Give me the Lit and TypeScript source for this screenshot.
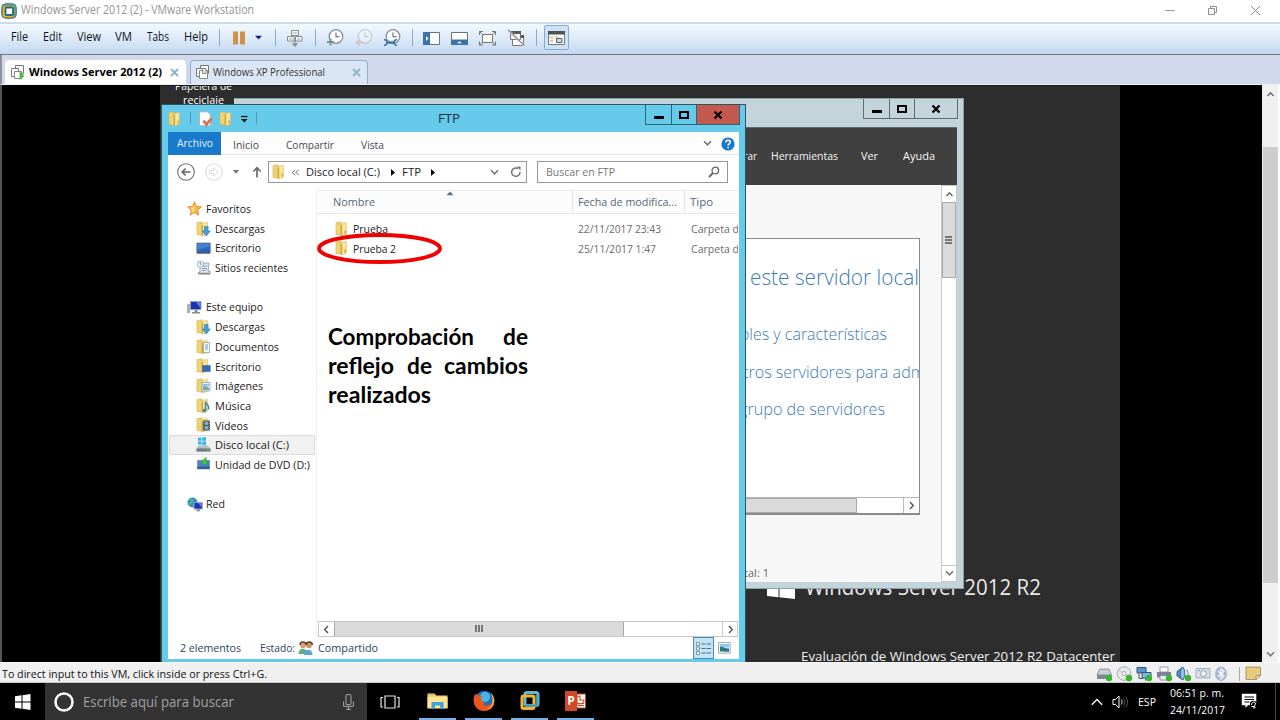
import { LitElement, html, css, svg, TemplateResult } from "lit";
import { customElement, property, query } from "lit/decorators.js";

/** Single-line label that condenses or expands its text to a given width. */
@customElement("ui-label")
class UiLabel extends LitElement {
  static styles = css`
    :host { display: block; white-space: pre; line-height: 1.36; flex: none; }
    span { display: inline-block; transform-origin: 0 50%; vertical-align: top; }
  `;
  @property() text = "";
  @property({ type: Number }) w = 0;
  @query("span") span!: HTMLSpanElement;
  firstUpdated() {
    this.style.width = `${this.w}px`;
    const natural = this.span.getBoundingClientRect().width;
    if (natural) this.span.style.transform = `scaleX(${this.w / natural})`;
  }
  render() {
    return html`<span>${this.text}</span>`;
  }
}

const label = (text: string, w: number, cls = "") =>
  html`<ui-label class=${cls} .text=${text} .w=${w}></ui-label>`;

const icon = (w: number, h: number, body: unknown) =>
  html`<svg width=${w} height=${h} viewBox="0 0 ${w} ${h}" fill="none">${body}</svg>`;

const clock = svg`<circle cx="10" cy="7.5" r="6.8" fill="#fdfdfd" stroke="#8b8f96" stroke-width="1.3"/><path d="M10 3.5v4.2h3.4" stroke="#777" stroke-width="1.2"/>`;
const folder = svg`<path d="M1 1.5 6 .8v13.4L1 13.4z" fill="#f0d474" stroke="#d3b04c" stroke-width=".6"/><path d="M5 2.5 11.4 1.5v11.8L6.5 15z" fill="#f8e69a" stroke="#d6b658" stroke-width=".6"/><path d="M6.5 3.4v11" stroke="#c9a640" stroke-width="1.2"/><path d="M9.3 9.4h1.600v3h-1.600z" fill="#d0ae4a"/>`;
const green = svg`<circle cx="13" cy="12" r="3.2" fill="#38b52c"/>`;

const icons: Record<string, TemplateResult> = {
  vm: icon(16, 16, svg`<rect x=".7" y=".7" width="14.6" height="14.6" rx="4" fill="#58a9b8" stroke="#2f7f97" stroke-width="1"/><rect x="1.5" y="2.5" width="12" height="12" rx="2.5" fill="#e5b13b" stroke="#a6812b" stroke-width=".8"/><rect x="4.500" y="4.500" width="7.5" height="7.5" rx="1" fill="#fff" stroke="#1f6d8b" stroke-width="1.8"/>`),
  pause: icon(14, 14, svg`<path d="M1 .5h5v13H1zM8 .5h5v13H8z" fill="#d2914a"/>`),
  down: icon(9, 6, svg`<path d="M1 .8h7L4.5 4.6z" fill="#0c1c9c"/>`),
  net: icon(18, 18, svg`<path d="M5.5 1.5h7v5h-7zM1.5 7.500h6.500v4.500H1.500zM9.500 7.500h6.500v4.500H9.500z" fill="#f8f9fb" stroke="#858a92"/><path d="M3 10h3.500M11 10h3.500M7 4h4" stroke="#9aa0a8"/><path d="M9 11v6M6.500 14l2.500 3 2.500-3" stroke="#858a92" stroke-width="1.300"/>`),
  snap: icon(19, 18, svg`${clock}<path d="M4.500 9.500v7M1 13h7" stroke="#6a9c86" stroke-width="2"/>`),
  revert: icon(19, 18, svg`<g opacity=".33">${clock}<path d="M9 13.500H2M5 10.500l-3.500 3 3.500 3" stroke="#c2906c" stroke-width="1.800"/></g>`),
  manage: icon(19, 18, svg`${clock}<path d="M3.500 13.500h8" stroke="#3b76ad" stroke-width="2.400"/><path d="M1 10.800c4-.8 4 6 0 5.400M14 10.800c-4-.8-4 6 0 5.400" stroke="#3b76ad" stroke-width="1.600"/>`),
  paneLeft: icon(19, 18, svg`<path d="M1.500 3.500h16v12h-16z" fill="#fff" stroke="#69737e"/><path d="M1 3h7v13H1z" fill="#3a74ac"/><path d="M4 7l2.500 2.500L4 12z" fill="#fff"/>`),
  paneBottom: icon(19, 18, svg`<path d="M1.500 3.500h16v12h-16z" fill="#fff" stroke="#69737e"/><path d="M1 10.500h17V16H1z" fill="#3a74ac"/><path d="M7 14.300l2.500-2 2.500 2z" fill="#fff"/>`),
  full: icon(19, 18, svg`<path d="M4.500 5.500h10v8h-10z" fill="#fafafa" stroke="#777"/><path d="M1.500 6V2.500H5M14 2.500h3.500V6M1.500 12.500V16H5M14 16h3.500v-3.500M1.500 2.500l3 3M17.500 2.500l-3 3M1.500 16l3-2.800M17.500 16l-3-2.800" stroke="#777"/>`),
  noUnity: icon(19, 18, svg`<path d="M5.500 7.500h11v9h-11z" fill="#fff" stroke="#777"/><path d="M13 6h4v3h-4z" fill="#5a5a5a"/><path d="M3.500 2.500h10v8h-10z" fill="#f4f4f4" stroke="#777"/><path d="M3 2h11v3H3z" fill="#5a5a5a"/><path d="M2 2l15.500 15" stroke="#e7eef7" stroke-width="2"/><path d="M1 1l16.500 15.500" stroke="#858585" stroke-width="1.200"/>`),
  library: icon(19, 18, svg`<path d="M1.500 2.500h16v13h-16z" fill="#fbfaf5" stroke="#74797e"/><path d="M1 2h17v3.500H1z" fill="#4d5257"/><path d="M3 7.500h3v2H3zM3 11h3v2H3zM7.500 7.500h4v1.500h-4z" fill="#dccb9e"/><path d="M9.500 9.500h5.500v4H9.500z" fill="#c9d9ef" stroke="#555f6c"/>`),
  tabOn: icon(16, 17, svg`<path d="M5.500 1.500h8v8h-8z" fill="#fff" stroke="#777"/><path d="M1.500 4.500h7v8h-7z" fill="#fff" stroke="#777"/><path d="M4.500 7.500h7v7h-7z" fill="#fff" stroke="#888"/><path d="M9.500 7.500 14.500 12l-5 4z" fill="#4eb83b"/>`),
  tab: icon(16, 17, svg`<path d="M5.500 1.500h8v8h-8z" fill="#fff" stroke="#777"/><path d="M1.500 4.500h7v8h-7z" fill="#fff" stroke="#777"/><path d="M4.500 6.500h8v8h-8z" fill="#fff" stroke="#888"/><path d="M7.500 4.500h3.500v5H7.500z" fill="#dfe6ef" stroke="#888"/>`),
  x: icon(9, 9, svg`<path d="M1 1l7 7M8 1L1 8" stroke="#8eb0ca" stroke-width="1.800"/>`),
  min: icon(11, 11, svg`<path d="M0 5.500h10" stroke="#9a9a9a"/>`),
  restore: icon(11, 11, svg`<path d="M1.500 3.500h6v6h-6zM3.500 3V1.500h6v6H8" stroke="#8d8d8d"/>`),
  close: icon(11, 11, svg`<path d="M1 1l9 9M10 1l-9 9" stroke="#8d8d8d"/>`),
  folder: icon(13, 16, folder),
  check: icon(15, 16, svg`<path d="M1.500 .8h8l3 3v11h-11z" fill="#fff" stroke="#aaa" stroke-width=".8"/><path d="M5.500 9.500l3 4 5-6" stroke="#e0704c" stroke-width="2.800"/>`),
  winMin: icon(12, 12, svg`<path d="M1 7h10v3H1z" fill="#000"/>`),
  winMax: icon(12, 12, svg`<path d="M2 3h8v6H2z" stroke="#000" stroke-width="2"/>`),
  winX: icon(12, 12, svg`<path d="M2.500 2.500l7 7M9.500 2.500l-7 7" stroke="#000" stroke-width="2.200"/>`),
  caret: icon(9, 9, svg`<path d="M1 1.500h6.500" stroke="#111" stroke-width="1.300"/><path d="M1 4h6.500L4.300 7.500z" fill="#111"/>`),
  chevDown: icon(9, 7, svg`<path d="M1 1.200l3.500 3.600L8 1.200" stroke="#777" stroke-width="1.600"/>`),
  chevUp: icon(9, 7, svg`<path d="M1.500 5l3-3.200L7.500 5" stroke="#666" stroke-width="1.400"/>`),
  chevLeft: icon(7, 9, svg`<path d="M5 1L1.700 4.500 5 8" stroke="#555" stroke-width="1.400"/>`),
  chevRight: icon(7, 9, svg`<path d="M2 1l3.300 3.500L2 8" stroke="#555" stroke-width="1.400"/>`),
  help: icon(14, 14, svg`<circle cx="7" cy="7" r="6.600" fill="#1a78cc"/><path d="M4.800 5.400c0-3 4.500-2.800 4.500-.2 0 1.500-2.200 1.700-2.200 3.200M7.100 9.700v1.600" stroke="#fff" stroke-width="1.500"/>`),
  back: icon(18, 18, svg`<circle cx="9" cy="9" r="8.300" stroke="#6f6f6f" stroke-width="1.100"/><path d="M13.500 9h-8M8.700 5.500L5.200 9l3.500 3.500" stroke="#666" stroke-width="1.700"/>`),
  fwd: icon(18, 18, svg`<circle cx="9" cy="9" r="8.300" stroke="#dcdcdc" stroke-width="1.100"/><path d="M4.500 7.500h4V5l4.500 4-4.500 4v-2.500h-4z" stroke="#dcdcdc"/>`),
  tri: icon(8, 6, svg`<path d="M.8 1h6.400L4 4.700z" fill="#777"/>`),
  up: icon(10, 12, svg`<path d="M5 11.500V2M1.300 5.500L5 1.700l3.700 3.800" stroke="#6b6b6b" stroke-width="1.700"/>`),
  crumb: icon(6, 9, svg`<path d="M1 1l4 3.500L1 8z" fill="#000"/>`),
  laquo: icon(9, 9, svg`<path d="M4 1.800L1.400 4.500 4 7.200M7.600 1.800L5 4.500l2.600 2.700" stroke="#666" stroke-width="1"/>`),
  reload: icon(12, 12, svg`<path d="M10 6a4.200 4.200 0 1 1-2.200-3.500" stroke="#777" stroke-width="1.500"/><path d="M6.500.5H10.500v4z" fill="#777"/>`),
  search: icon(12, 12, svg`<circle cx="7.300" cy="4.500" r="3.300" stroke="#666" stroke-width="1.300"/><path d="M5 7L1 11" stroke="#666" stroke-width="2"/>`),
  sort: icon(8, 5, svg`<path d="M.5 4.300L4 .5l3.500 3.800z" fill="#5a7184"/>`),
  star: icon(15, 15, svg`<path d="M7.500.8l2 4.600 4.900.5-3.700 3.300 1.100 4.900-4.300-2.500-4.300 2.500 1.100-4.900L.6 5.900l4.900-.5z" fill="#fbb63a" stroke="#e18a2c" stroke-width=".9"/><path d="M7.500 3v7.500l-3 1.500.8-3.500L3 6.500l3.200-.3z" fill="#fde08a"/>`),
  downloads: icon(15, 16, svg`${folder}<path d="M8.500 5.500h3.600V10h2.200l-4 5-4-5h2.200z" fill="#3e9ee0" stroke="#2a78b8" stroke-width=".6"/>`),
  desktop: icon(15, 16, svg`<path d="M.8 3h13.500v10H.8z" fill="#2f63b4" stroke="#76828e" stroke-width=".8"/><path d="M1.500 4h12v3c-5 0-7 2-12 3z" fill="#3f83d8"/><path d="M1 12.500h13v1H1z" fill="#34465c"/>`),
  recent: icon(15, 16, svg`<path d="M4 3h9l-1 8h2v3H4l-2-1 2-1z" fill="#e5eaee" stroke="#8b959c" stroke-width=".8"/><circle cx="4.200" cy="4" r="3.200" fill="#e8f0f4" stroke="#a5b0b7" stroke-width=".8"/><path d="M4.200 2v2.200h1.500M7 6h4.500M6 8.500h5M6 10.500h4" stroke="#7094ac" stroke-width=".9"/><path d="M2 13.500h12" stroke="#84898c" stroke-width="1.500"/>`),
  pc: icon(15, 14, svg`<path d="M3.500 1.500H14v8H3.500z" fill="#1b32b8" stroke="#9aa1aa"/><path d="M9 2h4.500v6z" fill="#5d83e6"/><path d="M7.500 10h3v2h2.500v1.500H5V12h2.500z" fill="#848c96"/><path d="M.6 4.500h2v8h-2z" fill="#b7bdc3" stroke="#7d858c" stroke-width=".6"/>`),
  docs: icon(15, 16, svg`${folder}<path d="M7.500 3.500h6v10h-6z" fill="#f5f9fc" stroke="#8ea0af" stroke-width=".8"/><path d="M9 6h3M9 8h3M9 10h3" stroke="#6c9cc4"/>`),
  deskFolder: icon(15, 16, svg`${folder}<path d="M6.500 7.500h7.800v6H6.500z" fill="#2d6dbb" stroke="#54718c" stroke-width=".7"/>`),
  images: icon(15, 16, svg`${folder}<path d="M6 4.500h8v8.500H6z" fill="#eaf4fa" stroke="#8aa5b6" stroke-width=".8"/><path d="M7 9l2-1.500 4 2.500v2H7z" fill="#6daf9c"/><path d="M7 6h6v2H7z" fill="#88c0ea"/>`),
  music: icon(15, 16, svg`${folder}<path d="M9.500 12.500V3.500c0 3 4.500 3 3 8" stroke="#2f88c5" stroke-width="1.300"/><circle cx="8.500" cy="12.500" r="1.700" fill="#2f88c5"/>`),
  video: icon(15, 16, svg`${folder}<path d="M7 3.500h7v10H7z" fill="#3c4d58"/><path d="M8.800 4.500h3.500v3.500H8.800zM8.800 9h3.500v3.500H8.800z" fill="#7fb3d0"/><path d="M7.800 4v9M13.300 4v9" stroke="#ccd6dc" stroke-width=".7" stroke-dasharray="1 1"/>`),
  disk: icon(15, 16, svg`<path d="M2 .8l3.500-.3v3.300H2zM6.200.5 10 0v3.800H6.200zM2 4.500h3.500v3.300L2 7.500zM6.200 4.500H10v3.800l-3.800-.4z" fill="#37b5ea"/><path d="M3 8.500h9l2.500 3H.5z" fill="#b7bfc6"/><path d="M.5 11.300h14v3.400H.5z" fill="#6f7b86"/><path d="M11 12.500h2v1.200h-2z" fill="#51db4c"/>`),
  dvd: icon(15, 15, svg`<path d="M1.500 3.500h12v8.500h-12z" fill="#4a83c7" stroke="#6a7f95" stroke-width=".6"/><path d="M1.500 9.500h12v2.500h-12z" fill="#335d96"/><path d="M10.500.300L7 3l-2 .500L8 8.500l4.500-4-2.500-.3z" fill="#41c443" stroke="#2a9636" stroke-width=".5"/>`),
  network: icon(16, 15, svg`<circle cx="5.500" cy="5.500" r="5" fill="#3a8bd8"/><path d="M3 2.500c2 0 3 1 2 2.500S2 6 1.500 8M6 8.500c1-1 2.500 0 2 1.500" stroke="#52bf5c" stroke-width="2"/><path d="M7 5.500h8.300v6.500H7z" fill="#1c34bf" stroke="#9ea8b4" stroke-width=".9"/><path d="M11 6h3.700v4z" fill="#6488e2"/><path d="M9.500 12.500h3.500v1.800H9.500z" fill="#7c8793"/>`),
  people: icon(15, 15, svg`<circle cx="5" cy="4.500" r="2.800" fill="#d6a06e"/><circle cx="11" cy="4.500" r="2.800" fill="#c99060"/><path d="M2 4c0-4 6-4 6 0M8.300 4c0-4 6-4 6 0" stroke="#5b3d26" stroke-width="1.400"/><path d="M.5 13c0-7 8.500-7 8.500 0z" fill="#5fae7a"/><path d="M6 14c0-7 8.500-7 8.500 0z" fill="#5ba4d4"/>`),
  details: icon(15, 13, svg`<path d="M.5.5h3v3h-3zM.5 5h3v3h-3zM.5 9.500h3v3h-3z" fill="#fff" stroke="#5d7c92" stroke-width=".8"/><path d="M5.500 2h4M10.500 2H15M5.500 6.500h4M10.500 6.500H15M5.500 11h4M10.500 11H15" stroke="#4a6d88" stroke-width="1.200"/>`),
  thumbs: icon(13, 12, svg`<path d="M.6.600h11.500v10.500H.600z" fill="#fff" stroke="#92a7b9"/><path d="M2 2h9v3.500H2z" fill="#8bc6f0"/><path d="M2 5c3-1 5 2 9 1.500V9.500H2z" fill="#2d7a68"/><path d="M6 7.500h5v2H6z" fill="#256fb0"/>`),
  winLogo: icon(16, 16, svg`<path d="M0 2.200l6.500-.9v6.200H0zM7.500 1.200L15.500 0v7.500h-8zM0 8.500h6.500v6.200L0 13.800zM7.500 8.500h8V16l-8-1.200z" fill="#fff"/>`),
  bigLogo: icon(29, 30, svg`<path d="M0 4l11.500-1.800V15H0zM12.500 2L28 -.5V15H12.500zM0 16h11.500v11.200L0 26zM12.500 16H28v13l-15.500-1.700z" fill="#fff"/>`),
  cortana: icon(20, 20, svg`<circle cx="10" cy="10" r="8.500" stroke="#fff" stroke-width="2.500"/>`),
  mic: icon(11, 16, svg`<rect x="3" y=".6" width="5" height="10" rx="1" stroke="#aaa"/><path d="M.6 7.500v4.800h9.800V7.500M5.500 12.300v3M3 15.300h5" stroke="#aaa"/>`),
  task: icon(20, 14, svg`<path d="M5 1h10v12H5zM3 2.500H1v9.500h2M17 2.500h2v9.500h-2" stroke="#e8e8e8" stroke-width="1.200"/>`),
  explorer: icon(21, 18, svg`<path d="M.5 1.500h7l1.500 2h11.500V16H.5z" fill="#f7d168"/><path d="M.5 5h20v11.500H.5z" fill="#fde594"/><path d="M4.500 10h12v7h-3.300v-3.500H8V17H4.500z" fill="#3ba5dc"/><path d="M2 1.500h4v1H2z" fill="#4a9ec9"/>`),
  firefox: icon(22, 22, svg`<circle cx="11.500" cy="10.500" r="9.700" fill="#1f6fc1"/><circle cx="12" cy="7" r="5" fill="#49b5ea"/><path d="M2 4c-4 9 1 17 9 17 7 0 11.500-5 10.300-13C20 13 17 16 13 15.500c-4-.5-3-3 0-3-3-2-5-1-5-4 0-1 1.500-1 1.500-2C7 6 5 6 5 4 4 4 3 5.500 2 4z" fill="#e8571c"/><path d="M18 3c3.500 3.500 4 8 2 12-2 3.500-6 5-9 4.500 5 0 8.500-4 8.500-8.500 0-3-.5-5-1.500-8z" fill="#fbb42e"/>`),
  vmTask: icon(20, 20, svg`<rect x="5" y="1.500" width="13" height="13" rx="2" stroke="#5fbcd0" stroke-width="3"/><rect x="2" y="5" width="12" height="12.500" rx="1.500" stroke="#f5b334" stroke-width="3"/><path d="M5.500 14.500h11V4" stroke="#3595b2" stroke-width="2"/>`),
  arrowUp: icon(12, 8, svg`<path d="M.8 6.800L6 1.500l5.200 5.300" stroke="#fff" stroke-width="1.300"/>`),
  sound: icon(17, 14, svg`<path d="M1 4.500h2.500L7 1v12L3.500 9.500H1z" stroke="#fff"/><path d="M9 4.500c1.500 1.500 1.500 3.500 0 5" stroke="#ddd"/><path d="M11 3c2.500 2.500 2.500 5.500 0 8M13.200 1.500c3.300 3.500 3.300 7.500 0 11" stroke="#555"/>`),
  notif: icon(17, 17, svg`<path d="M.8.8h14.500v11.500H7L4.500 15v-2.700H.8z" fill="#fff"/><path d="M3.500 4h9.500M3.500 6.500h9.500M3.500 9h5" stroke="#000"/><circle cx="12.500" cy="11.500" r="3.700" fill="#000"/><path d="M10.500 12c0-3 3-4 4-2l-1 3.500h-3M12 15l2.500-.5" stroke="#fff" stroke-width="1"/>`),
  hdd: icon(17, 16, svg`<path d="M3.500 3h9.500l2.500 6H1z" fill="#c8ced5" stroke="#6e7883" stroke-width=".7"/><path d="M1 9h14.500v4H1z" fill="#7d8895"/>${green}`),
  cd: icon(17, 16, svg`<circle cx="8" cy="7.500" r="6.800" fill="#e6eaed" stroke="#a4acb2"/><circle cx="8" cy="7.500" r="2" fill="#fff" stroke="#9aa3aa"/><path d="M3 4l3.500 2.500M9.500 9l3 3" stroke="#b8c2c9"/>${green}`),
  lan: icon(17, 16, svg`<path d="M1 1.500h9V7H1z" fill="#5595d0" stroke="#39566f"/><path d="M6 6.500h9V12H6z" fill="#7ab7e8" stroke="#39566f"/><path d="M3 7.500v5h4M9.500 12.500v2" stroke="#39566f"/>${green}`),
  printer: icon(17, 16, svg`<path d="M4 1h8v5H4z" fill="#fff" stroke="#82899a" stroke-width=".8"/><path d="M1 6h14v5.500H1z" fill="#7d8297"/><path d="M4 9.500h8v4.500H4z" fill="#eceef4" stroke="#7a8093" stroke-width=".8"/>${green}`),
  audio: icon(17, 16, svg`<path d="M2 5.500L8 1v13L2 10z" fill="#5593c8" stroke="#37638b"/><ellipse cx="7.500" cy="7.500" rx="2.300" ry="6" fill="#8fc0e8" stroke="#37638b"/><path d="M11.500 4c2 2 2 5 0 7" stroke="#6aa0cc" stroke-width="1.200"/>${green}`),
  camera: icon(17, 16, svg`<path d="M1 2.500h14v9.500H1z" fill="#d7dee4" stroke="#a5b1bc"/><circle cx="8.500" cy="7.500" r="3" fill="#eff3f6" stroke="#8d9dac"/><path d="M3 4.500h2" stroke="#7d93a6"/>`),
  bt: icon(14, 16, svg`<ellipse cx="7" cy="7.800" rx="6" ry="7.200" fill="#a9b7d4"/><path d="M4 5l6 5-3 2.800V2.800L10 5.500l-6 5" stroke="#fff" stroke-width="1.100"/>`),
  note: icon(17, 15, svg`<path d="M1 1h14.500v8.500L11 13.500H1z" fill="#eacb7d" stroke="#9c8350" stroke-width=".8"/><path d="M11 13.500v-4h4.500z" fill="#fff0c2" stroke="#9c8350" stroke-width=".8"/>`),
};

const sideItems: [string, string, number, string][] = [
  ["star", "Favoritos", 45, "root"], ["downloads", "Descargas", 50, ""], ["desktop", "Escritorio", 46, ""],
  ["recent", "Sitios recientes", 73, ""], ["", "", 0, ""], ["pc", "Este equipo", 57, "root"],
  ["downloads", "Descargas", 50, ""], ["docs", "Documentos", 64, ""], ["deskFolder", "Escritorio", 46, ""],
  ["images", "Imágenes", 48, ""], ["music", "Música", 36, ""], ["video", "Vídeos", 33, ""],
  ["disk", "Disco local (C:)", 74, "selected"], ["dvd", "Unidad de DVD (D:)", 95, ""], ["", "", 0, ""],
  ["network", "Red", 19, "root"],
];
const files: [string, number, string, number][] = [
  ["Prueba", 35, "22/11/2017 23:43", 83], ["Prueba 2", 43, "25/11/2017 1:47", 78],
];

@customElement("app-root")
class AppRoot extends LitElement {
  static styles = css`
    :host { display: flex; flex-direction: column; width: 1280px; height: 720px; overflow: hidden; background: #000;
      font-family: "Open Sans", "Noto Sans", sans-serif; font-size: 11.5px; color: #1b1b1b; }
    * { box-sizing: border-box; }
    svg { display: block; flex: none; }
    .titlebar { height: 22px; background: #fff; display: grid; grid-template-columns: 20px 1144px 42px 43px 20px; align-items: center;
      padding: 0 0 1px 1px; color: #949494; font-size: 12px; flex: none; }
    .menubar { height: 33px; flex: none; display: grid; align-items: center; padding: 0 0 3px 11px; color: #101522; font-size: 12px;
      border-top: 2px solid #ccdcec; border-bottom: 1px solid #71757c; background: linear-gradient(#f4f9fe, #dfebf8 45%, #c3d9f1);
      grid-template-columns: 32px 34px 38px 32px 37px 35px 13px 22px 21px 11px 29px 11px 29px 28px 29px 10px 28px 28px 29px 29px 8px 26px; }
    .sep { width: 1px; height: 17px; background: #8eabca; }
    .boxed { width: 25px; height: 25px; display: grid; place-items: center; border: 1px solid #85acd9; border-radius: 2px; background: #cfe1f6; }
    .tabs { height: 30px; flex: none; background: #d3d9ec; border-left: 2px solid #8d929b; border-bottom: 1px solid #edf0f7; padding: 5px 0 0 3px; display: flex; gap: 4px; }
    .tab { display: grid; align-items: center; padding-left: 5px; border-radius: 4px 4px 0 0; }
    .tab.on { width: 181px; background: #fff; font-weight: 700; color: #000; font-size: 11px; padding-top: 1px; grid-template-columns: 19px 141px 10px; }
    .tab.off { width: 178px; background: #dbe6f5; border: 1px solid #8db0d9; border-bottom: 0; grid-template-columns: 18px 139px 10px; padding-left: 4px; color: #333; font-size: 11px; }
    .viewport { height: 577px; flex: none; position: relative; display: flex; overflow: hidden; border-left: 2px solid #555; }
    .desktop { width: 960px; height: 577px; margin-left: 158px; background: #2d2d2d; position: relative; overflow: hidden; border-top: 1px solid #1a1a1a; }
    .vscroll { width: 16px; margin-left: 142px; background: #f0f0f0; display: flex; flex-direction: column; align-items: center; justify-content: space-between; padding: 6px 0 4px; }
    .vscroll .thumb { width: 15px; height: 436px; margin-bottom: 20px; background: #cdcdcd; }
    .edge { width: 2px; background: #fff; }
    .recycle { position: absolute; left: 10px; top: -7px; width: 66px; color: #fff; display: flex; flex-direction: column; align-items: center; }
    .recycle ui-label { line-height: 14px; }
    .brand { position: absolute; left: 607px; top: 484px; display: flex; gap: 9px; color: #e8e8e8; font-size: 22px; }
    .brand ui-label { margin-top: 2px; }
    .eval { position: absolute; left: 641px; top: 562px; color: #f0f0f0; font-size: 13px; }
    .win { position: absolute; display: flex; flex-direction: column; }
    .manager { left: 74px; top: 12px; width: 730px; height: 491px; background: #c3d5db; border: solid #8da0a8; border-width: 1px 1px 1px 0; padding: 0 6px 6px 0; }
    .winbtns { display: flex; height: 20px; border: 1px solid #5f6b70; border-top: 0; }
    .winbtns > div { display: grid; place-items: center; border-left: 1px solid #5f6b70; }
    .winbtns > div:first-child { border-left: 0; }
    .b1 { width: 25px; } .b2 { width: 25px; } .b3 { width: 43px; }
    .mtitle { height: 28px; display: flex; justify-content: flex-end; margin-right: -1px; }
    .mhead { height: 58px; background: #404040; color: #f4f4f4; display: grid; grid-template-columns: 537px 90px 42px 32px; align-items: center; font-size: 11px; border-top: 1px solid #60696c; }
    .mhead ui-label:first-child { justify-self: start; margin-left: 506px; }
    .mbody { flex: 1; display: flex; background: #f7f7f7; min-height: 0; }
    .mpage { width: 707px; display: flex; flex-direction: column; padding-top: 53px; }
    .card { width: 686px; height: 277px; border: solid #8b8b8b; border-width: 1px 1px 2px 0; background: #fff; display: flex; flex-direction: column; color: #3c7cb8; font-size: 17px; font-weight: 300; padding-left: 504px; overflow: hidden; }
    .card ui-label { height: 37.500px; line-height: 37.500px; }
    .card ui-label.h { font-size: 22px; height: 76px; line-height: 74px; margin-left: 12px; }
    .card ui-label.c1 { margin-left: 2px; } .card ui-label.c2 { margin-left: 5px; } .card ui-label.c3 { margin-left: 1px; }
    .cscroll { margin-top: auto; height: 16px; display: flex; border-top: 1px solid #b5b5b5; }
    .cscroll .thumb { width: 119px; background: #dadada; border: 1px solid #aaa; }
    .cscroll .arrow { margin-left: auto; width: 16px; border-left: 1px solid #bbb; display: grid; place-items: center; }
    .total { margin: 51px 0 0 510px; color: #666; font-size: 11px; }
    .mscroll { width: 16px; border: 1px solid #c8c8c8; background: #fff; display: flex; flex-direction: column; }
    .mscroll .arrow { height: 16px; display: grid; place-items: center; }
    .mscroll .thumb { height: 76px; background: #dadada; border: 1px solid #aaa; display: grid; place-items: center; }
    .mscroll .end { margin-top: auto; border-top: 1px solid #c8c8c8; }
    .files { left: 1px; top: 18px; width: 585px; height: 558px; background: #66caea; border: solid #2f5361; border-width: 1px 1px 0 1px; padding: 0 6px 3px 6px; }
    .ftitle { height: 27px; display: grid; grid-template-columns: 22px 8px 21px 21px 16px 182px 207px 95px; color: #14333f; align-items: start; }
    .ftitle > svg { margin-top: 6px; }
    .ftitle > svg.caret, .ftitle .drop { margin-top: 10px; }
    .ftitle > .sep { height: 12px; margin-top: 7px; background: #5795a8; }
    .ftitle > ui-label { font-size: 13px; margin-top: 5px; }
    .ftitle .winbtns { border-color: #2f6477; } .ftitle .winbtns > div { border-color: #2f6477; }
    .ftitle .b3 { background: #c35a50; }
    .ribbon { height: 23px; background: #fdfdfd; border-bottom: 1px solid #e4e6e8; display: grid; grid-template-columns: 53px 12px 53px 75px 342px 18px 14px; align-items: center; color: #4a4a52; font-size: 11px; }
    .ribbon > ui-label { padding-top: 3px; }
    .ribbon .archivo { background: #1979ca; color: #e7f2fc; height: 23px; display: grid; place-items: center; align-self: start; }
    .address { height: 35px; background: #fff; display: grid; grid-template-columns: 28px 27px 20px 16px 259px 10px 191px; align-items: center; padding: 0 0 1px 9px; color: #222; }
    .path { height: 22px; border: 1px solid #979797; display: grid; grid-template-columns: 19px 15px 84px 12px 28px 60px 20px 12px; padding-left: 3px; align-items: center; }
    .find { height: 22px; border: 1px solid #979797; display: flex; align-items: center; justify-content: space-between; padding: 0 7px 0 8px; color: #777; font-size: 11px; }
    .main { flex: 1; min-height: 0; display: flex; background: #fff; }
    .side { width: 149px; border-right: 1px solid #f0f0f0; padding: 9px 0 0 1px; }
    .item { height: 19.700px; width: 146px; display: grid; grid-template-columns: 19px 1fr; padding-left: 26px; align-items: center; border: 1px solid transparent; }
    .item.root { padding-left: 17px; }
    .item.selected { background: #f1f1f1; border-color: #dcdcdc; }
    .list { width: 421px; overflow: hidden; display: flex; flex-direction: column; color: #6b6b6b; border-top: 1px solid #ececec; }
    .cols { height: 23px; display: grid; grid-template-columns: 239px 6px 106px 6px 64px; padding-left: 16px; align-items: center; color: #54677d; border-bottom: 1px solid #e8e8e8; background: #fcfcfc; position: relative; }
    .cols .vline { width: 1px; height: 22px; background: #e2e5e8; }
    .cols .sort { position: absolute; left: 129px; top: 0; }
    .rows { padding-top: 5px; flex: 1; }
    .file { height: 19.600px; display: grid; grid-template-columns: 18px 225px 113px 50px; padding-left: 18px; align-items: center; }
    .file .name { color: #222; }
    .hscroll { height: 16px; display: flex; border: 1px solid #c8c8c8; background: #fff; margin-left: 1px; flex: none; }
    .hscroll .arrow { width: 15px; display: grid; place-items: center; }
    .hscroll .thumb { width: 290px; background: #dadada; border: 1px solid #a8a8a8; border-width: 0 1px; display: grid; place-items: center; }
    .hscroll .end { margin-left: auto; border-left: 1px solid #c8c8c8; }
    .fstatus { height: 22px; background: #fff; display: grid; grid-template-columns: 80px 38px 20px 375px 25px 13px; padding-left: 12px; align-items: center; color: #2b4566; flex: none; }
    .view { width: 21px; height: 22px; display: grid; place-items: center; background: #c3e3f6; border: 1px solid #4e8cba; }
    .oval { position: absolute; left: 315px; top: 147px; }
    .caption { position: absolute; left: 326px; top: 237px; width: 200px; font: 700 22px "Lato", "Open Sans", sans-serif; color: #000; }
    .caption div { height: 29px; display: flex; justify-content: space-between; }
    .caption ui-label { line-height: 29px; }
    .status { height: 21px; flex: none; background: #f0f0f0; border-bottom: 1px solid #c8c8c8; border-top: 1px solid #fafafa; display: grid; align-items: center; padding: 2px 0 0 2px; color: #111;
      grid-template-columns: 1094px 20px 20px 20px 19px 20px 19px 25px 6px 20px; }
    .status .sep { background: #aaa; height: 14px; }
    .taskbar { height: 37px; flex: none; background: #000; display: grid; grid-template-columns: 45px 322px 52px 46px 46px 46px 534px 21px 26px 32px 71px 34px 5px; align-items: center; color: #fff; }
    .start { padding-left: 15px; }
    .cortana { height: 37px; background: #333; color: #a0a0a0; font-size: 14px; display: grid; grid-template-columns: 29px 260px 11px; padding-left: 9px; align-items: center; }
    .taskview { padding-left: 13px; }
    .app { width: 37px; height: 37px; display: grid; place-items: center; border-bottom: 2px solid #76b2e8; }
    .clock { display: flex; flex-direction: column; justify-content: space-between; height: 33px; padding-bottom: 1px; }
    .clock ui-label { line-height: 15px; }
    .ppt { display: grid; grid-template-columns: 12px 9px; height: 20px; align-items: center; }
    .ppt b { height: 20px; background: #d24726; color: #fff; font-size: 12px; line-height: 20px; text-align: center; }
    .peek { width: 1px; height: 37px; background: #444; }
  `;

  menubar() {
    const sep = html`<div class="sep"></div>`;
    return html`<div class="menubar">
      ${label("File", 17)}${label("Edit", 19)}${label("View", 24)}${label("VM", 17)}${label("Tabs", 22)}${label("Help", 24)}
      ${sep}${icons.pause}${icons.down}${sep}${icons.net}${sep}${icons.snap}${icons.revert}${icons.manage}${sep}
      ${icons.paneLeft}${icons.paneBottom}${icons.full}${icons.noUnity}${sep}<div class="boxed">${icons.library}</div>
    </div>`;
  }

  windowButtons() {
    return html`<div class="winbtns"><div class="b1">${icons.winMin}</div><div class="b2">${icons.winMax}</div><div class="b3">${icons.winX}</div></div>`;
  }

  manager() {
    return html`<div class="win manager">
      <div class="mtitle">${this.windowButtons()}</div>
      <div class="mhead">${label("trar", 17)}${label("Herramientas", 67)}${label("Ver", 17)}${label("Ayuda", 32)}</div>
      <div class="mbody">
        <div class="mpage">
          <div class="card">
            ${label("este servidor local", 169, "h")}${label("oles y características", 147, "c1")}
            ${label("tros servidores para adm", 182, "c2")}${label("grupo de servidores", 146, "c3")}
            <div class="cscroll"><div class="thumb"></div><div class="arrow">${icons.chevRight}</div></div>
          </div>
          <div class="total">${label("tal: 1", 25)}</div>
        </div>
        <div class="mscroll">
          <div class="arrow">${icons.chevUp}</div>
          <div class="thumb">${icon(8, 9, svg`<path d="M0 1h7M0 4h7M0 7h7" stroke="#555" stroke-width="1.500"/>`)}</div>
          <div class="arrow end">${icons.chevDown}</div>
        </div>
      </div>
    </div>`;
  }

  fileWindow() {
    return html`<div class="win files">
      <div class="ftitle">
        ${icons.folder}<div class="sep"></div>${icons.check}${icons.folder}<div class="drop">${icons.caret}</div>
        <div class="sep"></div>${label("FTP", 22)}${this.windowButtons()}
      </div>
      <div class="ribbon">
        <div class="archivo">${label("Archivo", 36)}</div><span></span>
        ${label("Inicio", 26)}${label("Compartir", 48)}${label("Vista", 23)}${icons.chevDown}${icons.help}
      </div>
      <div class="address">
        ${icons.back}${icons.fwd}${icons.tri}${icons.up}
        <div class="path">${icons.folder}${icons.laquo}${label("Disco local (C:)", 74)}${icons.crumb}${label("FTP", 19)}${icons.crumb}${icons.chevDown}${icons.reload}</div>
        <span></span>
        <div class="find">${label("Buscar en FTP", 69)}${icons.search}</div>
      </div>
      <div class="main">
        <div class="side">
          ${sideItems.map(([ic, text, w, kind]) => html`<div class="item ${kind}">${text ? html`${icons[ic]}${label(text, w)}` : ""}</div>`)}
        </div>
        <div class="list">
          <div class="cols">
            ${label("Nombre", 42)}<div class="vline"></div>${label("Fecha de modifica...", 99)}<div class="vline"></div>${label("Tipo", 23)}
            <div class="sort">${icons.sort}</div>
          </div>
          <div class="rows">
            ${files.map(([n, w, d, dw]) => html`<div class="file">${icons.folder}${label(n, w, "name")}${label(d, dw)}${label("Carpeta d", 48)}</div>`)}
          </div>
          <div class="hscroll">
            <div class="arrow">${icons.chevLeft}</div>
            <div class="thumb">${icon(9, 8, svg`<path d="M1 0v7M4 0v7M7 0v7" stroke="#555" stroke-width="1.500"/>`)}</div>
            <div class="arrow end">${icons.chevRight}</div>
          </div>
        </div>
      </div>
      <div class="fstatus">
        ${label("2 elementos", 61)}${label("Estado:", 35)}${icons.people}${label("Compartido", 60)}
        <div class="view">${icons.details}</div>${icons.thumbs}
      </div>
    </div>`;
  }

  render() {
    return html`
      <div class="titlebar">${icons.vm}${label("Windows Server 2012 (2) - VMware Workstation", 233)}${icons.min}${icons.restore}${icons.close}</div>
      ${this.menubar()}
      <div class="tabs">
        <div class="tab on">${icons.tabOn}${label("Windows Server 2012 (2)", 133)}${icons.x}</div>
        <div class="tab off">${icons.tab}${label("Windows XP Professional", 112)}${icons.x}</div>
      </div>
      <div class="viewport">
        <div class="desktop">
          <div class="recycle">${label("Papelera de", 57)}${label("reciclaje", 41)}</div>
          <div class="brand">${icons.bigLogo}${label("Windows Server 2012 R2", 236)}</div>
          <div class="eval">${label("Evaluación de Windows Server 2012 R2 Datacenter", 314)}</div>
          ${this.manager()}${this.fileWindow()}
        </div>
        <div class="vscroll">${icons.chevUp}<div class="thumb"></div>${icons.chevDown}</div>
        <div class="edge"></div>
        <div class="oval">${icon(126, 32, svg`<ellipse cx="62.500" cy="16.500" rx="60.500" ry="13.500" stroke="#f00000" stroke-width="3.800"/>`)}</div>
        <div class="caption">
          <div>${label("Comprobación", 146)}${label("de", 25)}</div>
          <div>${label("reflejo", 66)}${label("de", 25)}${label("cambios", 84)}</div>
          <div>${label("realizados", 103)}</div>
        </div>
      </div>
      <div class="status">
        ${label("To direct input to this VM, click inside or press Ctrl+G.", 265)}
        ${icons.hdd}${icons.cd}${icons.lan}${icons.printer}${icons.audio}${icons.camera}${icons.bt}<div class="sep"></div>${icons.note}
      </div>
      <div class="taskbar">
        <div class="start">${icons.winLogo}</div>
        <div class="cortana">${icons.cortana}${label("Escribe aquí para buscar", 151)}${icons.mic}</div>
        <div class="taskview">${icons.task}</div>
        <div class="app">${icons.explorer}</div><div class="app">${icons.firefox}</div><div class="app">${icons.vmTask}</div>
        <div class="app">
          <div class="ppt"><b>P</b>${icon(9, 20, svg`<path d="M0 3h8.500v14H0z" fill="#fff" stroke="#d24726"/><path d="M3 5v4h4A4 4 0 1 1 3 5M1 12.500h6M1 14.500h6" stroke="#d24726" stroke-width="1.100"/>`)}</div>
        </div>
        ${icons.arrowUp}${icons.sound}${label("ESP", 18)}
        <div class="clock">${label("06:51 p. m.", 54)}${label("24/11/2017", 55)}</div>
        ${icons.notif}<div class="peek"></div>
      </div>`;
  }
}
